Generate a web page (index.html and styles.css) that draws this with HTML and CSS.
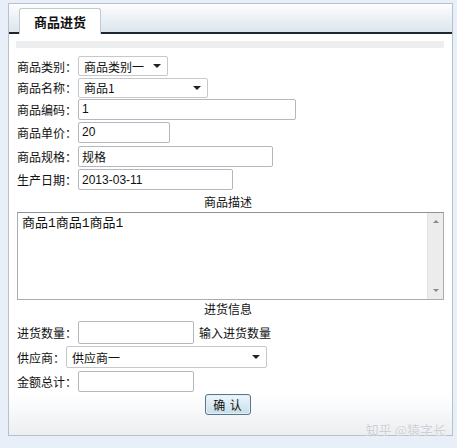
FILE: index.html
```html
<!DOCTYPE html>
<html lang="zh-CN">
<head>
  <meta charset="UTF-8" />
  <title>商品进货</title>
  <link rel="stylesheet" href="styles.css">
</head>
<body>

<div class="panel">
  <!-- Tab header -->
  <div class="panel-head">
    <div class="tab">商品进货</div>
  </div>

  <div class="panel-body">
    <div class="bar"></div>

    <form class="form">
      <div class="row r1">
        <span class="label">商品类别：</span>
        <div class="select w90"><span>商品类别一</span><i class="arrow"></i></div>
      </div>
      <div class="row r2">
        <span class="label">商品名称：</span>
        <div class="select w130"><span>商品1</span><i class="arrow"></i></div>
      </div>
      <div class="row r3">
        <span class="label">商品编码：</span>
        <input class="text w218" value="1">
      </div>
      <div class="row r4">
        <span class="label">商品单价：</span>
        <input class="text w92" value="20">
      </div>
      <div class="row r5">
        <span class="label">商品规格：</span>
        <input class="text w195" value="规格">
      </div>
      <div class="row r6">
        <span class="label">生产日期：</span>
        <input class="text w155" value="2013-03-11">
      </div>

      <div class="title">商品描述</div>
      <div class="desc">
        <div class="desc-text">商品1商品1商品1</div>
        <div class="scroll">
          <i class="up"></i>
          <i class="down"></i>
        </div>
      </div>

      <div class="title t2">进货信息</div>
      <div class="row r7">
        <span class="label">进货数量：</span>
        <input class="text w116 tall">
        <span class="hint">输入进货数量</span>
      </div>
      <div class="row r8">
        <span class="label">供应商：</span>
        <div class="select w201"><span>供应商一</span><i class="arrow"></i></div>
      </div>
      <div class="row r9">
        <span class="label">金额总计：</span>
        <input class="text w116">
      </div>
      <div class="actions">
        <button type="button" class="btn">确 认</button>
      </div>
    </form>
  </div>

  <div class="mark">知乎 @猿字长</div>
</div>

</body>
</html>
```

FILE: styles.css
```css
body {
  margin: 0;
  background: #e9eff8;
  font-family: "Noto Sans CJK SC", "Liberation Sans", sans-serif;
  font-size: 12px;
  color: #111;
}

.panel {
  position: relative;
  margin: 3px 0 0 8px;
  width: 443px;
  height: 431px;
  border: 1px solid #b7c1cc;
  background: #fff;
  display: flex;
  flex-direction: column;
}

.panel-head {
  height: 28px;
  background: linear-gradient(#fcfdfe, #dde5ee);
  border-bottom: 2px solid #1b2733;
  display: flex;
  align-items: flex-end;
  padding-left: 10px;
}

.tab {
  width: 80px;
  height: 25px;
  margin-bottom: -2px;
  background: #fff;
  border: 1px solid #c3c9d0;
  border-bottom: none;
  border-radius: 3px 3px 0 0;
  font-size: 13px;
  font-weight: bold;
  text-align: center;
  line-height: 25px;
}

.panel-body {
  flex: 1;
  background: linear-gradient(#fff 90%, #eceef1);
}

.bar {
  height: 7px;
  margin: 7px 8px 0 7px;
  background: #eceef0;
}

.form {
  display: flex;
  flex-direction: column;
  padding: 7px 7px 0 8px;
}

.row {
  display: flex;
  align-items: center;
}

.r1 { height: 22px; }
.r2 { height: 21px; }
.r3 { height: 22px; }
.r4 { height: 24px; }
.r5 { height: 24px; }
.r6 { height: 23px; }
.r7 { height: 25px; }
.r8 { height: 24px; }
.r9 { height: 24px; }

.label {
  white-space: nowrap;
  margin-right: 1px;
}

.text {
  box-sizing: border-box;
  height: 21px;
  border: 1px solid #b3b8be;
  border-radius: 2px;
  padding: 0 3px;
  font-family: "Liberation Sans", "Noto Sans CJK SC", sans-serif;
  font-size: 12px;
  color: #111;
  background: #fff;
}

.text.tall { height: 23px; }

.w92 { width: 92px; }
.w116 { width: 116px; }
.w155 { width: 155px; }
.w195 { width: 195px; }
.w218 { width: 218px; }

.select {
  box-sizing: border-box;
  height: 20px;
  border: 1px solid #c5c9ce;
  border-radius: 2px;
  background: #fff;
  display: flex;
  align-items: center;
  justify-content: space-between;
  padding: 0 6px 0 5px;
  font-size: 12px;
}

.w90 { width: 90px; }
.w130 { width: 130px; }
.w201 { width: 201px; height: 22px; }

.arrow {
  width: 0;
  height: 0;
  border-left: 4px solid transparent;
  border-right: 4px solid transparent;
  border-top: 4px solid #222;
}

.title {
  height: 21px;
  line-height: 21px;
  text-align: center;
  padding-right: 6px;
}

.t2 { height: 20px; line-height: 18px; }

.desc {
  display: flex;
  height: 86px;
  border: 1px solid #a9adb2;
  border-top-color: #8e9398;
  margin-right: 1px;
  background: #fff;
}

.desc-text {
  flex: 1;
  padding: 2px 4px;
  font-family: "Liberation Mono", "Noto Sans CJK SC", monospace;
  font-size: 13px;
  line-height: 18px;
}

.scroll {
  width: 15px;
  background: #ececec;
  border-left: 1px solid #e2e2e2;
  display: flex;
  flex-direction: column;
  justify-content: space-between;
  align-items: center;
  padding: 7px 0 7px;
}

.scroll .up {
  border-left: 3px solid transparent;
  border-right: 3px solid transparent;
  border-bottom: 3px solid #8a8a8a;
}

.scroll .down {
  border-left: 3px solid transparent;
  border-right: 3px solid transparent;
  border-top: 3px solid #8a8a8a;
}

.hint {
  margin-left: 5px;
}

.actions {
  display: flex;
  justify-content: center;
  padding: 1px 0 0;
}

.btn {
  width: 46px;
  height: 21px;
  padding: 0;
  margin-right: 6px;
  border: 1px solid #5a7588;
  border-radius: 3px;
  background: linear-gradient(#eef6fb, #c8dde9);
  box-shadow: inset 0 0 0 1px #dff0f9;
  font-family: "Noto Sans CJK SC", sans-serif;
  font-size: 12px;
  color: #111;
  letter-spacing: 1px;
}

.mark {
  position: absolute;
  right: 6px;
  bottom: -4px;
  font-size: 13px;
  color: #ccd0d5;
  text-shadow: 0 0 1px #fff;
}
```
